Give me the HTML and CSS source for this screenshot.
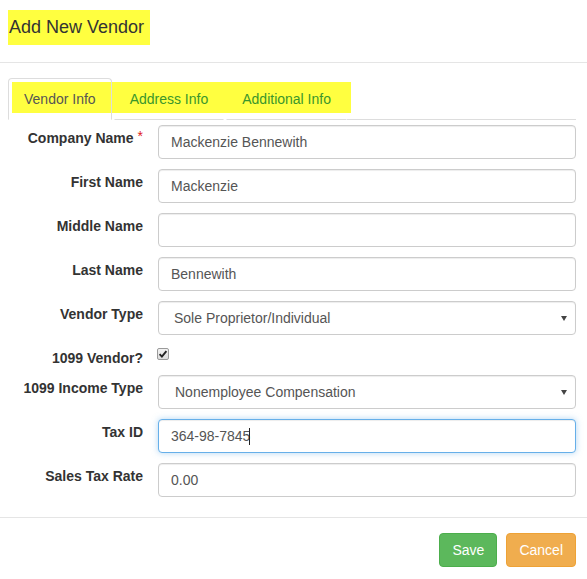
FILE: index.html
```html
<!DOCTYPE html>
<html lang="en">
<head>
<meta charset="utf-8">
<title>Add New Vendor</title>
<link rel="stylesheet" href="styles.css">
</head>
<body>
<div class="modal">
  <div class="modal-header">
    <h4 class="modal-title">Add New Vendor</h4>
  </div>
  <div class="modal-body">
    <div class="tabs">
      <a class="tab active">Vendor Info</a>
      <a class="tab">Address Info</a>
      <a class="tab">Additional Info</a>
      <span class="tab-fill"></span>
    </div>
    <form class="form">
      <div class="row">
        <label class="lbl">Company Name<span class="req">*</span></label>
        <input class="ctl" type="text" value="Mackenzie Bennewith">
      </div>
      <div class="row">
        <label class="lbl">First Name</label>
        <input class="ctl" type="text" value="Mackenzie">
      </div>
      <div class="row">
        <label class="lbl">Middle Name</label>
        <input class="ctl" type="text" value="">
      </div>
      <div class="row">
        <label class="lbl">Last Name</label>
        <input class="ctl" type="text" value="Bennewith">
      </div>
      <div class="row">
        <label class="lbl">Vendor Type</label>
        <div class="sel-wrap">
          <select class="ctl sel"><option>Sole Proprietor/Individual</option></select>
        </div>
      </div>
      <div class="row row-check">
        <label class="lbl">1099 Vendor?</label>
        <div class="check-wrap">
          <span class="check"><svg width="10" height="10" viewBox="0 0 10 10"><path d="M1.6 5.2 L3.9 7.6 L8.4 2.2" fill="none" stroke="#222" stroke-width="1.9"/></svg></span>
        </div>
      </div>
      <div class="row">
        <label class="lbl">1099 Income Type</label>
        <div class="sel-wrap">
          <select class="ctl sel sel2"><option>Nonemployee Compensation</option></select>
        </div>
      </div>
      <div class="row">
        <label class="lbl">Tax ID</label>
        <div class="focus-wrap">
          <input class="ctl focus" type="text" value="364-98-7845"><span class="caret"></span>
        </div>
      </div>
      <div class="row">
        <label class="lbl">Sales Tax Rate</label>
        <input class="ctl" type="text" value="0.00">
      </div>
    </form>
  </div>
  <div class="modal-footer">
    <button class="btn btn-save" type="button">Save</button>
    <button class="btn btn-cancel" type="button">Cancel</button>
  </div>
</div>
</body>
</html>
```
FILE: styles.css
```css
* { box-sizing: border-box; }
html, body { margin: 0; padding: 0; background: #fff; }
body {
  font-family: "Liberation Sans", Arial, sans-serif;
  font-size: 14px;
  line-height: 20px;
  color: #333;
}
.modal { width: 587px; }

.modal-header {
  padding: 10px 0 17px 8px;
  border-bottom: 1px solid #e5e5e5;
}
.modal-title {
  margin: 0;
  display: inline-block;
  height: 35px;
  width: 142px;
  padding-left: 1px;
  font-size: 18px;
  font-weight: normal;
  line-height: 34px;
  color: #333;
  background: #ffff40;
}

.modal-body { padding: 15px 11px 10px 8px; }

.tabs {
  position: relative;
  display: flex;
  height: 42px;
}
.tabs::before {
  content: "";
  position: absolute;
  left: 4px;
  top: 4px;
  width: 339px;
  height: 31px;
  background: #ffff40;
  z-index: 0;
}
.tab {
  position: relative;
  z-index: 1;
  display: block;
  padding: 10px 15px;
  line-height: 20px;
  margin-right: 2px;
  border: 1px solid transparent;
  border-bottom: 1px solid #ddd;
  border-radius: 4px 4px 0 0;
  color: #3a962c;
  text-decoration: none;
  white-space: nowrap;
}
.tab.active {
  color: #555;
  border-color: #ddd;
  border-bottom-color: transparent;
}
.tab-fill {
  flex: 1;
  border-bottom: 1px solid #ddd;
  height: 42px;
  margin-left: -2px;
}

.form { margin-top: 5px; }
.row {
  display: grid;
  grid-template-columns: 135px 1fr;
  column-gap: 15px;
  margin-bottom: 10px;
}
.lbl {
  text-align: right;
  font-weight: bold;
  padding-top: 3px;
  line-height: 20px;
  white-space: nowrap;
}
.req {
  color: #e02020;
  font-weight: normal;
  margin-left: 4px;
  position: relative;
  top: -2px;
}
.ctl {
  display: block;
  width: 100%;
  height: 34px;
  margin: 0;
  padding: 6px 12px;
  font-family: "Liberation Sans", Arial, sans-serif;
  font-size: 14px;
  line-height: 20px;
  color: #555;
  background: #fff;
  border: 1px solid #ccc;
  border-radius: 4px;
  box-shadow: inset 0 1px 1px rgba(0,0,0,0.075);
  outline: none;
}
.sel-wrap { position: relative; }
.sel-wrap::after {
  content: "";
  position: absolute;
  right: 9px;
  top: 15px;
  border-left: 3px solid transparent;
  border-right: 3px solid transparent;
  border-top: 5px solid #444;
}
.sel {
  -webkit-appearance: none;
  appearance: none;
  padding-left: 15px;
}
.sel2 { padding-left: 16px; }

.row-check { margin-bottom: 7px; }
.check-wrap { padding-top: 3px; }
.check {
  display: flex;
  align-items: center;
  justify-content: center;
  width: 12px;
  height: 12px;
  margin-left: -1px;
  border: 1px solid #9a9a9a;
  border-radius: 2px;
  background: linear-gradient(#f2f2f2, #dcdcdc);
}
.check svg { display: block; }

.focus-wrap { position: relative; }
.focus {
  border-color: #66afe9;
  box-shadow: inset 0 1px 1px rgba(0,0,0,0.075), 0 0 6px rgba(102,175,233,0.5);
}
.caret {
  position: absolute;
  left: 91px;
  top: 9px;
  width: 1px;
  height: 17px;
  background: #222;
}

.modal-footer {
  border-top: 1px solid #e5e5e5;
  padding: 15px 11px 15px 0;
  display: flex;
  justify-content: flex-end;
  gap: 9px;
}
.btn {
  height: 34px;
  padding: 6px 12px;
  font-family: "Liberation Sans", Arial, sans-serif;
  font-size: 14px;
  line-height: 20px;
  color: #fff;
  border: 1px solid transparent;
  border-radius: 4px;
  cursor: pointer;
}
.btn-save { background: #5cb85c; border-color: #4cae4c; }
.btn-cancel { background: #f0ad4e; border-color: #eea236; }
```
